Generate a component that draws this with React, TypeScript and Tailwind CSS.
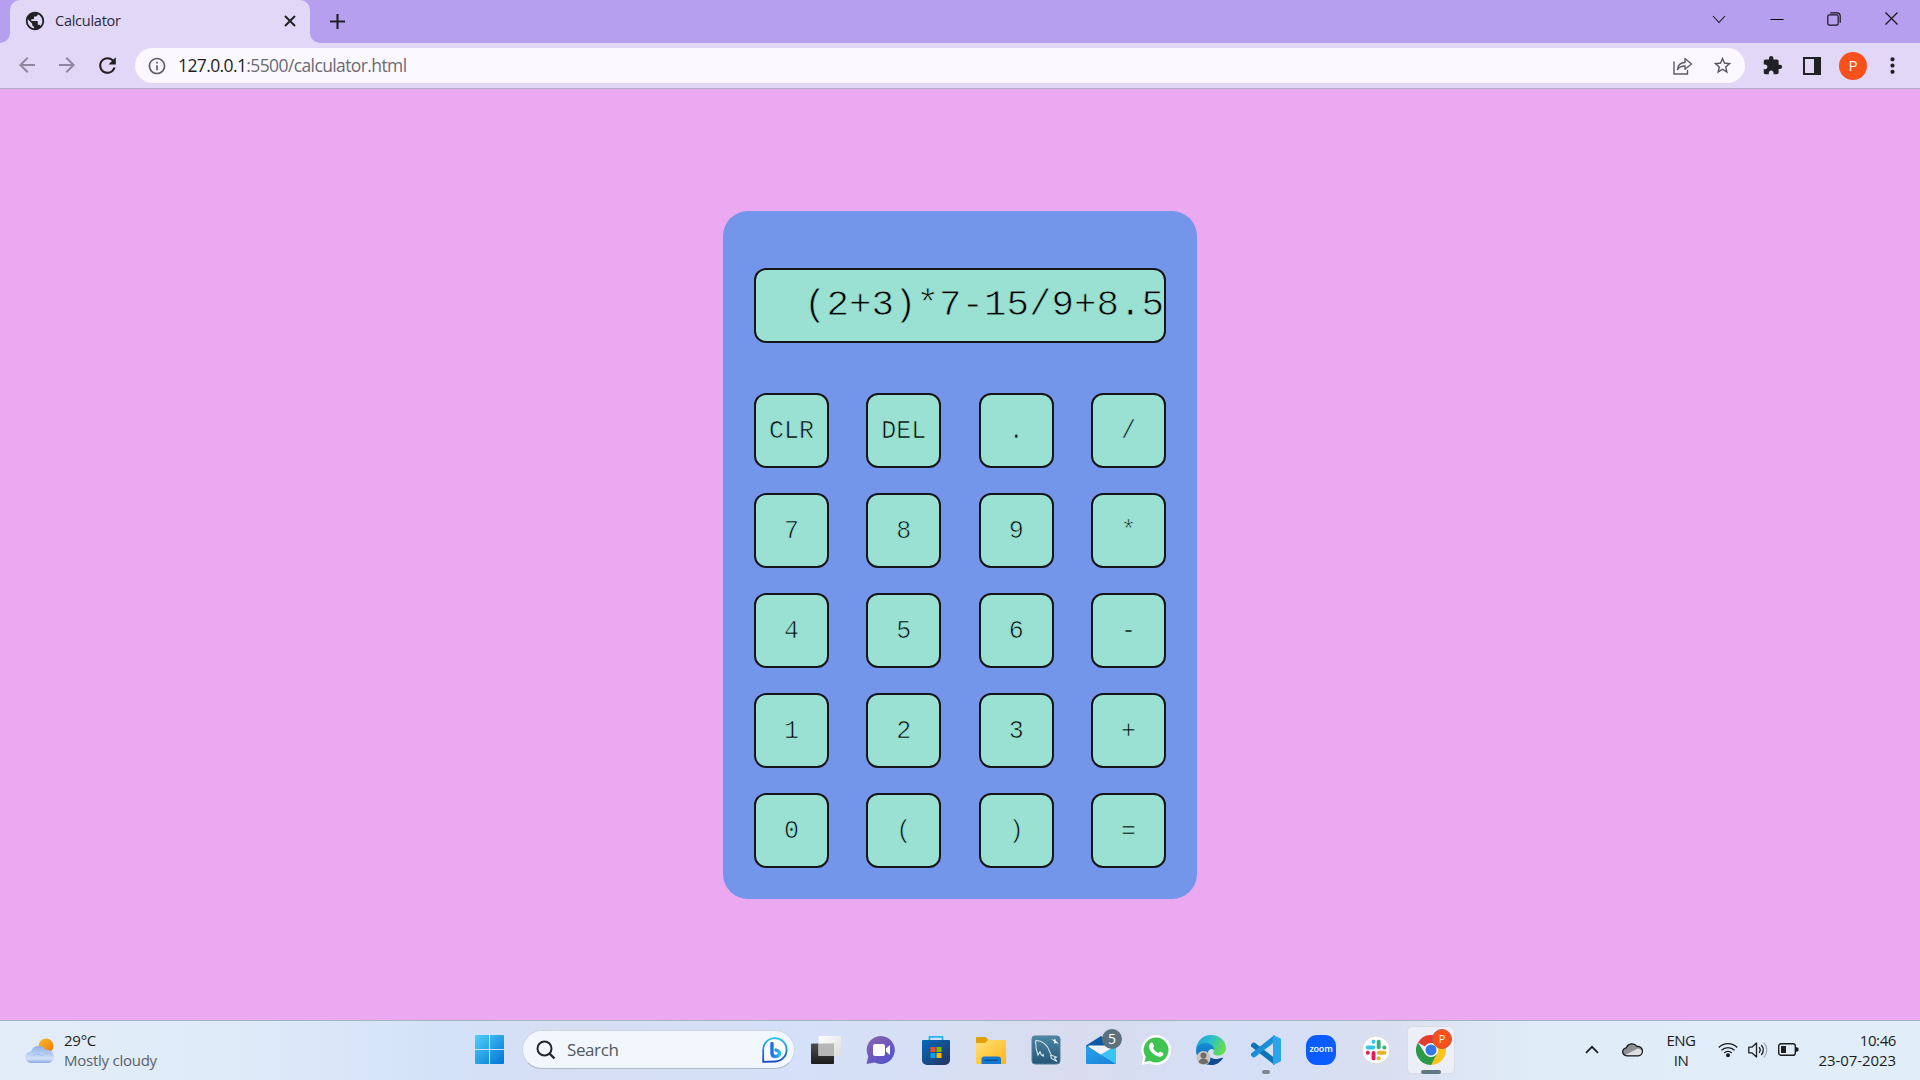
import React from 'react';
import {
  MdPublic,
  MdExtension,
  MdRefresh,
  MdStarBorder,
  MdArrowBack,
  MdArrowForward,
  MdMoreVert,
  MdInfoOutline,
} from 'react-icons/md';

const KEYS = [
  'CLR', 'DEL', '.', '/',
  '7', '8', '9', '*',
  '4', '5', '6', '-',
  '1', '2', '3', '+',
  '0', '(', ')', '=',
];

function TitleBar() {
  return (
    <div className="flex h-[43px] shrink-0 bg-[#b69fee]">
      <div className="w-[10px] bg-[#e1d8f7]">
        <div className="h-full w-full rounded-br-[10px] bg-[#b69fee]" />
      </div>
      <div className="flex w-[300px] items-center rounded-t-[10px] bg-[#e1d8f7] pr-[12px] pl-[14px]">
        <MdPublic size={22} color="#202124" className="-mt-[1px]" />
        <span className="-mt-[2px] ml-[9px] text-[14.500px] tracking-[-0.25px] text-[#2b2839]">Calculator</span>
        <svg className="-mt-[1px] ml-auto" width="16" height="16" viewBox="0 0 16 16" stroke="#202124" strokeWidth="2">
          <path d="M3 3l10 10M13 3L3 13" />
        </svg>
      </div>
      <div className="w-[10px] bg-[#e1d8f7]">
        <div className="h-full w-full rounded-bl-[10px] bg-[#b69fee]" />
      </div>
      <svg className="mt-[13px] ml-[9px]" width="17" height="17" viewBox="0 0 17 17" stroke="#202124" strokeWidth="2.1">
        <path d="M1 8.500h15M8.500 1v15" />
      </svg>
      <div className="mr-[21px] ml-auto flex h-[37px] items-center gap-[43px]">
        <svg width="16" height="16" viewBox="0 0 16 16" fill="none" stroke="#17141f" strokeWidth="1.1">
          <path d="M2 5l6 6.500 6-6.500" />
        </svg>
        <svg width="14" height="16" viewBox="0 0 14 16" stroke="#000" strokeWidth="1">
          <path d="M.5 8.500h13" />
        </svg>
        <svg width="14" height="14" viewBox="0 0 14 14" fill="none" stroke="#17141f" strokeWidth="1.2">
          <rect x=".8" y="2.800" width="10.400" height="10.400" rx="1.600" />
          <path d="M3.300 .8h6.500a3.400 3.400 0 0 1 3.400 3.400v6.500" />
        </svg>
        <svg width="15" height="15" viewBox="0 0 15 15" stroke="#17141f" strokeWidth="1.2">
          <path d="M1.500 1.500l12 12M13.500 1.500l-12 12" />
        </svg>
      </div>
    </div>
  );
}

function AddressBar() {
  return (
    <div className="flex h-[46px] shrink-0 items-center border-b border-[#b4adc9] bg-[#e1d8f7]">
      <MdArrowBack size={24} color="#8f869f" className="-mt-[1px] ml-[15px]" />
      <MdArrowForward size={24} color="#8f869f" className="-mt-[1px] ml-[16px]" />
      <MdRefresh size={25} color="#202124" className="ml-[16px]" />
      <div className="ml-[15px] flex h-[35px] w-[1610px] items-center rounded-full bg-[#fbf9ff]">
        <MdInfoOutline size={20} color="#5b5c63" className="ml-[12px]" />
        <span className="ml-[11px] text-[17.500px] tracking-[-0.61px] text-[#6c6a73]">
          <span className="text-[#1f1f25]">127.0.0.1</span>:5500/calculator.html
        </span>
        <svg className="ml-auto" width="20" height="18" viewBox="0 0 20 18" fill="none" stroke="#5d5b66" strokeWidth="1.400">
          <path d="M1 4.500v12.500h13.500v-4" />
          <path d="M4.500 12.500c.4-4.600 2.800-6.800 7.500-7V1.500l6.500 5.500-6.500 5.300V9c-3.600-.1-5.600.8-7.500 3.500z" strokeLinejoin="round" />
        </svg>
        <MdStarBorder size={21} color="#55545d" className="mr-[12px] ml-[19px]" />
      </div>
      <MdExtension size={21} color="#202124" className="ml-[17px]" />
      <svg className="ml-[20px]" width="18" height="18" viewBox="0 0 18 18">
        <path fill="#202124" fillRule="evenodd" d="M0 0h18v18H0zM2 2v14h9V2z" />
      </svg>
      <div className="ml-[18px] flex size-[28px] items-center justify-center rounded-full bg-[#f6511d] text-[15px] text-white">
        P
      </div>
      <MdMoreVert size={25} color="#202124" className="ml-[13px]" />
    </div>
  );
}

function Calculator() {
  return (
    <div className="flex h-[688px] w-[474px] flex-col rounded-[25px] bg-[#7496ea] px-[31px] pt-[57px] font-['Liberation_Mono',monospace] text-black">
      <div className="flex h-[75px] justify-end overflow-hidden rounded-[12px] border-2 border-[#141619] bg-[#9ae1d3] pt-[14px] text-[37.500px] leading-[42px] [-webkit-text-stroke:0.8px_#9ae1d3]">
        (2+3)*7-15/9+8.5
      </div>
      <div className="mt-[50px] grid grid-cols-[75px_75px_75px_75px] justify-between gap-y-[25px]">
        {KEYS.map((k) => (
          <button
            key={k}
            className="flex h-[75px] items-center justify-center rounded-[12px] border-2 border-[#141619] bg-[#9ae1d3] pt-[3px] text-[25px] [-webkit-text-stroke:0.7px_#9ae1d3]"
          >
            {k}
          </button>
        ))}
      </div>
    </div>
  );
}

function Weather() {
  return (
    <div className="ml-[25px] flex w-[225px] items-center">
      <svg width="30" height="26" viewBox="0 0 30 26" className="mt-[2px]">
        <defs>
          <linearGradient id="sun" x1="0" y1="0" x2="1" y2="1">
            <stop offset="0" stopColor="#f9bd2e" />
            <stop offset="1" stopColor="#f0760a" />
          </linearGradient>
          <linearGradient id="cloud" x1="0" y1="0" x2="0" y2="1">
            <stop offset="0" stopColor="#8db1ee" />
            <stop offset=".75" stopColor="#d3e0fa" />
            <stop offset="1" stopColor="#88a7e4" />
          </linearGradient>
        </defs>
        <circle cx="21" cy="8" r="7.500" fill="url(#sun)" />
        <path d="M6 25a5.800 5.800 0 0 1 0-11.600A8 8 0 0 1 20.500 12 6.600 6.600 0 1 1 24 25z" fill="url(#cloud)" />
        <path d="M8 18c3-3 7-2 9 0 2-3 6-4 10-1" fill="none" stroke="#a0bcf0" strokeWidth="1" />
      </svg>
      <div className="ml-[9px] text-[15px] leading-[20px] tracking-[-0.25px]">
        <div className="text-[#1b1d20]">29°C</div>
        <div className="text-[#5a6068]">Mostly cloudy</div>
      </div>
    </div>
  );
}

function StartIcon() {
  return (
    <svg width="29" height="29" viewBox="0 0 29 29">
      <defs>
        <linearGradient id="win" x1="0" y1="0" x2="1" y2="1">
          <stop offset="0" stopColor="#4fd0fb" />
          <stop offset="1" stopColor="#0074d3" />
        </linearGradient>
      </defs>
      <path fill="url(#win)" d="M1 0h13v14H0V1a1 1 0 0 1 1-1zM15 0h13a1 1 0 0 1 1 1v13H15zM0 15h14v14H1a1 1 0 0 1-1-1zM15 15h14v13a1 1 0 0 1-1 1H15z" />
    </svg>
  );
}

function SearchBox() {
  return (
    <div className="ml-[18px] flex h-[39px] w-[273px] items-center rounded-full border border-[#cdd5e6] border-b-[#aeb6c8] bg-[#f2f6fd]">
      <svg className="ml-[13px]" width="20" height="20" viewBox="0 0 20 20" fill="none" stroke="#25262a" strokeWidth="2">
        <circle cx="8.500" cy="8.500" r="7" />
        <path d="M13.500 13.500l5 5" strokeWidth="2.400" />
      </svg>
      <span className="ml-[11px] text-[17px] tracking-[-0.4px] text-[#53565d]">Search</span>
      <svg className="mr-[6px] ml-auto" width="26" height="26" viewBox="0 0 26 26">
        <defs>
          <linearGradient id="bing" x1="0" y1="0" x2="0" y2="1">
            <stop offset="0" stopColor="#22c3ee" />
            <stop offset="1" stopColor="#1b48c6" />
          </linearGradient>
          <linearGradient id="bingB" x1="0" y1="0" x2="1" y2="0">
            <stop offset="0" stopColor="#1f6fe8" />
            <stop offset="1" stopColor="#2fb9f0" />
          </linearGradient>
        </defs>
        <path d="M1.200 24.800V13A11.700 11.700 0 1 1 13 24.500z" fill="#f9fbff" stroke="url(#bing)" strokeWidth="1.800" />
        <path
          d="M10 6.500v9.500c0 5 6.500 4 7.500 1 .6-2.200-1.200-3.200-3.500-4"
          fill="none"
          stroke="url(#bingB)"
          strokeWidth="3.400"
          strokeLinecap="round"
          strokeLinejoin="round"
        />
      </svg>
    </div>
  );
}

function TaskViewIcon() {
  return (
    <svg width="30" height="30" viewBox="0 0 30 30">
      <defs>
        <linearGradient id="tv" x1="0" y1="0" x2="0" y2="1">
          <stop offset="0" stopColor="#4c4c4c" />
          <stop offset="1" stopColor="#1c1c1c" />
        </linearGradient>
        <linearGradient id="tvl" x1="0" y1="0" x2="1" y2="1">
          <stop offset="0" stopColor="#fff" />
          <stop offset="1" stopColor="#dcdcdc" />
        </linearGradient>
      </defs>
      <rect x="0" y="8.500" width="23" height="20.500" rx="1" fill="url(#tv)" />
      <rect x="7.500" y="1" width="22.500" height="20" rx="1" fill="url(#tvl)" />
      <path d="M7.500 8.500H23V21H7.500z" fill="#b6b6b6" />
    </svg>
  );
}

function ChatIcon() {
  return (
    <svg width="30" height="30" viewBox="0 0 30 30">
      <defs>
        <linearGradient id="chat" x1=".1" y1="0" x2=".9" y2="1">
          <stop offset="0" stopColor="#8b62a8" />
          <stop offset="1" stopColor="#4f52d0" />
        </linearGradient>
      </defs>
      <path d="M15 1a14 14 0 1 1-6.500 26.500L.5 29l1.800-7.500A14 14 0 0 1 15 1z" fill="url(#chat)" />
      <rect x="7" y="9" width="12" height="12" rx="2" fill="#fff" />
      <path d="M20 13.500l4-3.500v10l-4-3.500z" fill="#fff" />
    </svg>
  );
}

function StoreIcon() {
  return (
    <svg width="30" height="30" viewBox="0 0 30 30">
      <defs>
        <linearGradient id="store" x1="0" y1="0" x2="1" y2="1">
          <stop offset="0" stopColor="#0669bd" />
          <stop offset="1" stopColor="#25325c" />
        </linearGradient>
      </defs>
      <path d="M8.500 6V1.800h13V6" fill="none" stroke="#22b8ee" strokeWidth="1.800" />
      <path d="M1.500 5h27l.5.500V25a5 5 0 0 1-5 5H6a5 5 0 0 1-5-5V5.500z" fill="url(#store)" />
      <path d="M9.500 12h5v5h-5z" fill="#f25022" />
      <path d="M15.500 12h5v5h-5z" fill="#7fba00" />
      <path d="M9.500 18h5v5h-5z" fill="#00a4ef" />
      <path d="M15.500 18h5v5h-5z" fill="#ffb900" />
    </svg>
  );
}

function ExplorerIcon() {
  return (
    <svg width="30" height="30" viewBox="0 0 30 30">
      <defs>
        <linearGradient id="folder" x1="0" y1="0" x2="1" y2="1">
          <stop offset="0" stopColor="#ffe07a" />
          <stop offset="1" stopColor="#fdb813" />
        </linearGradient>
      </defs>
      <path d="M0 3a1 1 0 0 1 1-1h8.500l3 3H29a1 1 0 0 1 1 1v4H0z" fill="#e0a106" />
      <path d="M0 8h9l3-3h18v23a1 1 0 0 1-1 1H1a1 1 0 0 1-1-1z" fill="url(#folder)" />
      <path d="M5.500 29v-4.500a3 3 0 0 1 3-3h13.500a3 3 0 0 1 3 3V29z" fill="#1478cf" />
      <path d="M8.500 25.300h13" stroke="#0b4d8f" strokeWidth="1.300" />
    </svg>
  );
}

function WorkbenchIcon() {
  return (
    <svg width="30" height="30" viewBox="0 0 30 30">
      <defs>
        <linearGradient id="sql" x1="0" y1="0" x2="0" y2="1">
          <stop offset="0" stopColor="#4d87a5" />
          <stop offset="1" stopColor="#245675" />
        </linearGradient>
      </defs>
      <rect x="1" y="1" width="28" height="28" rx="3" fill="url(#sql)" stroke="#527f99" />
      <path
        d="M9 16.500l-2 3.500c-1-4-2.500-6-2-9.500C5 8 4 7 5 5.500c4.500 0 9 3 11.500 6.500 2 3 2 6.500 4.500 8.500l4.500 1.500-2 1 2.500 3.500-5.500-3-1-3.500M9 16.500c.5 2 1.500 4.200 3.500 4.500l-.5-2"
        fill="none"
        stroke="#d8e5ec"
        strokeWidth="1.100"
      />
      <path d="M20 4l3 1 1-1.500 1 2.500 3 3-3-1-2 .5.300-2z" fill="#f1f6f9" />
    </svg>
  );
}

function MailIcon() {
  return (
    <div className="relative size-[30px]">
      <svg width="30" height="30" viewBox="0 0 30 30">
        <defs>
          <linearGradient id="mail" x1="0" y1="0" x2="1" y2="1">
            <stop offset="0" stopColor="#27a3ea" />
            <stop offset="1" stopColor="#1b80d8" />
          </linearGradient>
        </defs>
        <path d="M0 10.500L15 1l15 9.500v6H0z" fill="#0c59a4" />
        <path d="M2.500 10.500h25v4L15 20 2.500 12z" fill="#f2f3f6" />
        <path d="M30 10.500v18H10l5-9z" fill="#3ac4f5" />
        <path d="M0 10.500L30 29H1a1 1 0 0 1-1-1z" fill="url(#mail)" />
      </svg>
      <div className="absolute -top-[6px] left-[16px] flex size-[20px] items-center justify-center rounded-full bg-[#5b717c] text-[14px] leading-none text-white">
        5
      </div>
    </div>
  );
}

function WhatsAppIcon() {
  return (
    <svg width="30" height="30" viewBox="0 0 30 30">
      <path d="M15 0a15 15 0 1 1-6.800 28.300L.5 30l1.800-7.500A15 15 0 0 1 15 0z" fill="#fff" />
      <path d="M15 2.500a12.500 12.500 0 1 1-6.300 23.300L3.500 27l1.300-5A12.500 12.500 0 0 1 15 2.500z" fill="#3fc351" />
      <path
        d="M10 7.800c.7-.5 1.600-.4 1.900.4l1.200 2.700c.3.700-1.200 1.900-1 2.400 1.200 2.300 2.800 3.700 5 4.700.6.200 1.500-1.700 2.100-1.500l2.800 1.500c.7.300.3 1.700-.2 2.300-1 1.300-2.600 1.800-4.300 1.300-4.600-1.300-7.500-4-9.300-8C7.300 11.300 8.300 9 10 7.800z"
        fill="#fff"
      />
    </svg>
  );
}

function EdgeIcon() {
  return (
    <svg width="30" height="30" viewBox="0 0 30 30">
      <defs>
        <linearGradient id="edgeTop" x1="0" y1="0" x2="1" y2=".4">
          <stop offset="0" stopColor="#1d9ce0" />
          <stop offset=".5" stopColor="#2bbfcd" />
          <stop offset="1" stopColor="#62dc55" />
        </linearGradient>
        <linearGradient id="edgeLeft" x1="0" y1="0" x2="0" y2="1">
          <stop offset="0" stopColor="#178ed8" />
          <stop offset="1" stopColor="#0f5daf" />
        </linearGradient>
      </defs>
      <path d="M0 14C1 6 7 0 15 0c9 0 15 6.500 15 13 0 5-4 7.500-8 7.500-3 0-5.500-1-4.500-3.500 1.500-3-.5-6.500-5-7C7 9.500 2 11 0 14z" fill="url(#edgeTop)" />
      <path d="M0 15c1-5 6-7.500 10.500-7 5 .5 8 4 7.500 7-2-2-5.500-1-6 2.500C11.500 23 17 26 26.500 22.500 24 27 20 30 15 30 7 30 0 24 0 15z" fill="url(#edgeLeft)" />
      <path d="M12 17.500c0 5.500 6 8.500 15.500 5-3 5-7.500 7.500-12.500 7.500-4-1.500-6-6-3-12.500z" fill="#124a91" />
      <circle cx="7.500" cy="23" r="7" fill="#c9c6c2" />
      <circle cx="7.500" cy="20.500" r="3" fill="#6e6b69" />
      <path d="M2.800 27.500c0-5.500 9.400-5.500 9.400 0a7 7 0 0 1-9.400 0z" fill="#6e6b69" />
    </svg>
  );
}

function CodeIcon() {
  return (
    <div className="relative size-[30px]">
      <svg width="30" height="30" viewBox="0 0 30 30">
        <path d="M0 9.500l2-1.800c.6-.4 1.200-.4 1.800 0L23.500 23v7L0 11.500z" fill="#0b72b5" />
        <path d="M0 20.500l2 1.800c.6.400 1.200.4 1.800 0L23.500 7V0L0 18.500z" fill="#1b8fd6" />
        <path d="M22 0l7 3.200c.6.300 1 .8 1 1.500v20.600c0 .7-.4 1.200-1 1.500L22 30z" fill="#2ba4ec" />
      </svg>
      <div className="absolute top-[35px] left-[11px] h-[4px] w-[8px] rounded-full bg-[#7f8795]" />
    </div>
  );
}

function ZoomIcon() {
  return (
    <div className="flex size-[30px] items-center justify-center rounded-[11px] bg-[#0b5cff] pb-[2px] text-[9px] leading-none font-semibold tracking-[-0.2px] text-white">
      zoom
    </div>
  );
}

function SlackIcon() {
  return (
    <svg width="30" height="30" viewBox="0 0 30 30">
      <circle cx="15" cy="15" r="14" fill="#fbfbfb" stroke="#d9dadd" />
      <g strokeWidth="3.900" strokeLinecap="round" fill="none">
        <path d="M6.700 12.500h5.500" stroke="#36c5f0" />
        <path d="M12.500 6.700v.1" stroke="#36c5f0" />
        <path d="M17.700 6.700v5.500" stroke="#2eb67d" />
        <path d="M23.300 12.500h.1" stroke="#2eb67d" />
        <path d="M17.900 17.700h5.500" stroke="#ecb22e" />
        <path d="M17.700 23.300v.1" stroke="#ecb22e" />
        <path d="M12.500 17.900v5.500" stroke="#e01e5a" />
        <path d="M6.800 17.700h.1" stroke="#e01e5a" />
      </g>
    </svg>
  );
}

function ChromeIcon() {
  return (
    <div className="relative -mx-[9px] flex size-[48px] items-center justify-center rounded-[5px] border border-[#d9dce8] bg-[#eceff8]">
      <svg width="30" height="30" viewBox="0 0 30 30">
        <path d="M15 15L2 7.500A15 15 0 0 1 28 7.500z" fill="#e33b2e" />
        <path d="M15 15V8h13.300A15 15 0 0 1 15 30z" fill="#fcc31e" />
        <path d="M15 15l6 3.500L15 30A15 15 0 0 1 2 7.500l7 11z" fill="#2a9a48" />
        <circle cx="15" cy="15" r="7" fill="#fff" />
        <circle cx="15" cy="15" r="5.500" fill="#3378e6" />
      </svg>
      <div className="absolute top-[2px] left-[24px] flex size-[20px] items-center justify-center rounded-full border border-[#c4573c] bg-[#f6511d] text-[11px] leading-none text-[#fbe3da]">
        P
      </div>
      <div className="absolute top-[43px] left-[13px] h-[4px] w-[20px] rounded-full bg-[#607883]" />
    </div>
  );
}

function Tray() {
  return (
    <div className="mr-[24px] ml-auto flex items-center text-[#1b1d20]">
      <svg width="14" height="9" viewBox="0 0 14 9" fill="none" stroke="#1b1d20" strokeWidth="1.700">
        <path d="M1 7.800l6-6 6 6" />
      </svg>
      <svg className="ml-[23px]" width="21" height="15" viewBox="0 0 21 15">
        <path d="M5 13.800a4 4 0 0 1-.6-8A6 6 0 0 1 15 4.500a4.700 4.700 0 0 1 1.500 9.300z" fill="#8e9092" />
        <path d="M3 13l13-6.500c3 .5 4.500 2.500 4 4.500-.5 1.800-2 2.800-3.500 2.800H5z" fill="#dddfe0" />
        <path d="M5 13.800a4 4 0 0 1-.6-8A6 6 0 0 1 15 4.500a4.700 4.700 0 0 1 1.500 9.300z" fill="none" stroke="#17191b" strokeWidth="1.300" />
      </svg>
      <div className="ml-[20px] w-[36px] text-center text-[15px] leading-[20px] tracking-[-0.5px]">
        <div>ENG</div>
        <div>IN</div>
      </div>
      <svg className="ml-[19px]" width="20" height="16" viewBox="0 0 20 16" fill="none" stroke="#1b1d20" strokeWidth="1.300">
        <path d="M.8 5.500a13 13 0 0 1 18.400 0M3.500 8.300a9.200 9.200 0 0 1 13 0M6.200 11a5.400 5.400 0 0 1 7.600 0" />
        <circle cx="10" cy="13.300" r="2" fill="#1b1d20" stroke="none" />
      </svg>
      <svg className="ml-[10px]" width="21" height="18" viewBox="0 0 21 18" fill="none" stroke="#1b1d20" strokeWidth="1.300">
        <path d="M.8 6.200h3L8.500 2v14l-4.700-4.200h-3z" strokeLinejoin="round" />
        <path d="M11 6.300a4 4 0 0 1 0 5.400M13.300 4a7.300 7.300 0 0 1 0 10" />
        <path d="M15.800 1.500a11 11 0 0 1 0 15" stroke="#a5abb2" />
      </svg>
      <svg className="ml-[9px]" width="21" height="13" viewBox="0 0 21 13">
        <rect x=".7" y=".7" width="16.600" height="11.600" rx="2.400" fill="none" stroke="#1b1d20" strokeWidth="1.400" />
        <path d="M3 3h5v7H3zM18 4l2.500 1v3L18 9z" fill="#1b1d20" />
      </svg>
      <div className="ml-[18px] w-[79px] text-right text-[15px] leading-[20px] whitespace-nowrap">
        <div className="tracking-[-0.4px]">10:46</div>
        <div className="tracking-[-0.080px]">23-07-2023</div>
      </div>
    </div>
  );
}

function Taskbar() {
  return (
    <div className="flex h-[60px] shrink-0 items-center border-t border-[#a9b3bd] bg-[linear-gradient(to_right,#e2edf8_0%,#dfebf8_12%,#d4e2f9_23%,#d6def3_29%,#d5e1f9_42%,#d8dcee_56%,#d4dff7_65%,#dadff0_72%,#e0ecf8_80%,#e1edf8_100%)] pb-[2px]">
      <Weather />
      <div className="ml-[225px]">
        <StartIcon />
      </div>
      <SearchBox />
      <div className="ml-[16px] flex items-center gap-[25px]">
        <TaskViewIcon />
        <ChatIcon />
        <StoreIcon />
        <ExplorerIcon />
        <WorkbenchIcon />
        <MailIcon />
        <WhatsAppIcon />
        <EdgeIcon />
        <CodeIcon />
        <ZoomIcon />
        <SlackIcon />
        <ChromeIcon />
      </div>
      <Tray />
    </div>
  );
}

export default function App() {
  return (
    <div className="flex h-[1080px] w-[1920px] flex-col overflow-hidden font-['Open_Sans','Noto_Sans',sans-serif]">
      <TitleBar />
      <AddressBar />
      <main className="flex flex-1 items-center justify-center bg-[#eba9f1]">
        <Calculator />
      </main>
      <Taskbar />
    </div>
  );
}
